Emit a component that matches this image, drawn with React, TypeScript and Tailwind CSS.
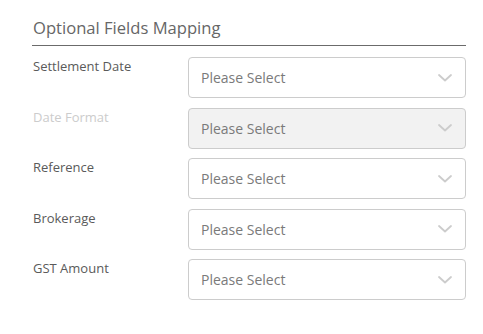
const FIELDS = [
  { label: "Settlement Date", disabled: false },
  { label: "Date Format", disabled: true },
  { label: "Reference", disabled: false },
  { label: "Brokerage", disabled: false },
  { label: "GST Amount", disabled: false },
];

function Chevron() {
  return (
    <svg width="14" height="8" viewBox="0 0 14 8" fill="none" aria-hidden="true">
      <polyline points="1 1 7 6.5 13 1" stroke="#cccccc" strokeWidth="1.8" strokeLinecap="round" strokeLinejoin="round" />
    </svg>
  );
}

export default function App() {
  return (
    <div className="min-h-[334px] w-[483px] bg-white font-['Open_Sans',sans-serif]">
      <div className="ml-[32px] w-[434px] pt-[16px]">
        <h2 className="pl-[1px] text-[16.6px] leading-[24px] text-[#666666]">Optional Fields Mapping</h2>
        <div className="mt-[5px] h-px bg-[#6b6b6b]" />
        <div className="mt-[11px] flex flex-col gap-[9.5px]">
          {FIELDS.map((f) => (
            <div key={f.label} className="flex items-start">
              <label
                className={`w-[156px] pl-[1px] pt-0 text-[13px] leading-[18px] ${
                  f.disabled ? "text-[#cccccc]" : "text-[#5a5a5a]"
                }`}
              >
                {f.label}
              </label>
              <div
                className={`flex h-[41px] flex-1 items-center justify-between rounded-[4px] border border-[#cccccc] pl-[12px] pr-[13px] ${
                  f.disabled ? "bg-[#f2f2f2]" : "bg-white"
                }`}
              >
                <span className="text-[14px] text-[#7a7a7a]">Please Select</span>
                <Chevron />
              </div>
            </div>
          ))}
        </div>
      </div>
    </div>
  );
}
